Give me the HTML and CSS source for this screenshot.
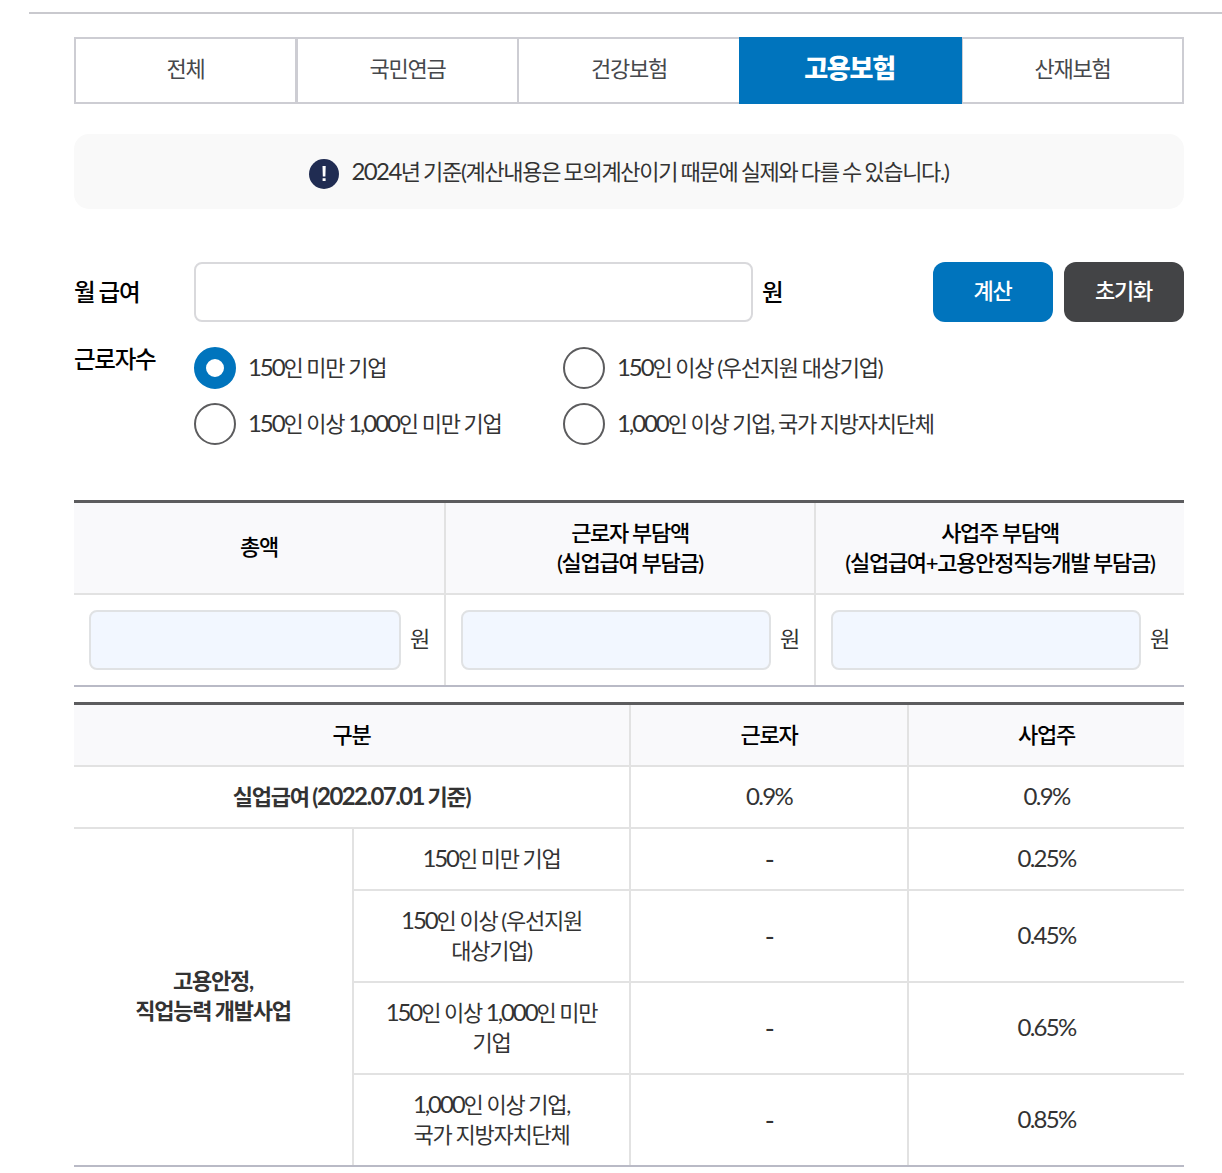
FILE: index.html
```html
<!DOCTYPE html>
<html lang="ko">
<head>
<meta charset="utf-8">
<title>고용보험 계산</title>
<link rel="stylesheet" href="styles.css">
</head>
<body>
<hr class="rule">
<main class="page">
<nav class="tabs"><a class="tab">전체</a><a class="tab">국민연금</a><a class="tab">건강보험</a><a class="tab active">고용보험</a><a class="tab">산재보험</a></nav>
<div class="notice"><svg class="mark" viewBox="0 0 30 30" width="30" height="30"><circle cx="15" cy="15" r="15" fill="#202c52"/><path d="M13.5 7h3.2l-.3 10.5h-2.6zM13.6 19.2h3v2.8h-3z" fill="#fff"/></svg><p><span class="n year">2024</span>년 기준(계산내용은 모의계산이기 때문에 실제와 다를 수 있습니다.)</p></div>
<form class="form">
<div class="salary"><label class="label">월 급여</label><input class="salary-input" type="text"><span class="won">원</span><button class="btn primary" type="button">계산</button><button class="btn dark" type="button">초기화</button></div>
<div class="workers"><span class="label">근로자수</span><div class="options">
<label class="option"><i class="radio checked"></i><span class="text"><span class="n">150</span>인 미만 기업</span></label>
<label class="option"><i class="radio"></i><span class="text"><span class="n">150</span>인 이상 (우선지원 대상기업)</span></label>
<label class="option"><i class="radio"></i><span class="text"><span class="n">150</span>인 이상 <span class="n">1,000</span>인 미만 기업</span></label>
<label class="option"><i class="radio"></i><span class="text"><span class="n">1,000</span>인 이상 기업, 국가 지방자치단체</span></label>
</div></div>
</form>
<table class="table result">
<colgroup><col class="r1"><col class="r2"><col class="r3"></colgroup>
<thead><tr><th class="total">총액</th><th>근로자 부담액<br>(실업급여 부담금)</th><th>사업주 부담액<br>(실업급여+고용안정직능개발 부담금)</th></tr></thead>
<tbody><tr><td><div class="amount"><input type="text"><span>원</span></div></td><td><div class="amount"><input type="text"><span>원</span></div></td><td><div class="amount"><input type="text"><span>원</span></div></td></tr></tbody>
</table>
<table class="table rates">
<colgroup><col class="c1"><col class="c2"><col class="c3"><col class="c4"></colgroup>
<thead><tr><th colspan="2">구분</th><th>근로자</th><th>사업주</th></tr></thead>
<tbody>
<tr class="single"><th colspan="2">실업급여 (<span class="n year">2022.07.01</span> 기준)</th><td><span class="n pct">0.9%</span></td><td><span class="n pct">0.9%</span></td></tr>
<tr class="single"><th rowspan="4" class="group">고용안정,<br>직업능력 개발사업</th><td><span class="n">150</span>인 미만 기업</td><td><span class="dash">-</span></td><td><span class="n pct">0.25%</span></td></tr>
<tr class="double"><td><span class="n">150</span>인 이상 (우선지원<br>대상기업)</td><td><span class="dash">-</span></td><td><span class="n pct">0.45%</span></td></tr>
<tr class="double"><td><span class="n">150</span>인 이상 <span class="n">1,000</span>인 미만<br>기업</td><td><span class="dash">-</span></td><td><span class="n pct">0.65%</span></td></tr>
<tr class="double last"><td><span class="n">1,000</span>인 이상 기업,<br>국가 지방자치단체</td><td><span class="dash">-</span></td><td><span class="n pct">0.85%</span></td></tr>
</tbody>
</table>
</main>
</body>
</html>
```
FILE: styles.css
```css
* { box-sizing: border-box; }
body { margin: 0; background: #fff; color: #333; font: 22px/30px Lato, "Noto Sans CJK KR", sans-serif; letter-spacing: -1.25px; word-spacing: -.5px; }
.n { font-size: 24px; line-height: 0; letter-spacing: -2.1px; }
.year { letter-spacing: -1.6px; }
.pct { letter-spacing: -1.7px; }
.dash { font-size: 27px; line-height: 0; vertical-align: -2px; }
.rule { margin: 12px 0 0 29px; border: 0; height: 2px; background: #c9c9ce; }
.page { width: 1110px; margin: 23px 0 0 74px; }
.tabs { display: grid; grid-template-columns: 224px 221px 220px 223px 222px; height: 67px; }
.tab { display: flex; align-items: center; justify-content: center; padding-bottom: 3px; border: 2px solid #cdcdd3; border-left-width: 0; color: #46484c; }
.tab:first-child { border-left-width: 2px; border-right-width: 3px; }
.tab:nth-child(3) { border-right-width: 0; }
.tab:last-child { border-left-width: 1px; }
.tab.active { border-color: #0074bd; background: #0074bd; color: #fff; font-size: 26px; font-weight: 900; padding-bottom: 6px; }
.notice { display: flex; align-items: center; justify-content: center; gap: 12px; height: 75px; margin-top: 30px; border-radius: 15px; background: #f9f9f9; }
.notice p { margin: 0; letter-spacing: -1.3px; word-spacing: -1px; }
.mark { margin-top: 4px; }
.form { margin: 53px 0 0; }
.salary { display: flex; align-items: center; }
.label { width: 120px; color: #000; font-size: 23.5px; font-weight: 500; }
.salary-input { width: 559px; height: 60px; border: 2px solid #d9d9dc; border-radius: 8px; }
.won { width: 180px; padding-left: 9px; font-size: 23.5px; font-weight: 500; color: #000; }
.btn { width: 120px; height: 60px; padding: 0 1px 2px 0; border: 0; border-radius: 12px; color: #fff; font: inherit; font-weight: 500; letter-spacing: inherit; }
.primary { background: #0074bd; }
.dark { margin-left: 11px; background: #434446; }
.workers { display: flex; margin-top: 25px; }
.workers .label { margin-top: -3px; }
.options { display: grid; grid-template-columns: 369px 1fr; row-gap: 14px; flex: 1; }
.option { display: flex; align-items: center; gap: 12px; }
.radio { width: 42px; height: 42px; border: 2px solid #5c5c5e; border-radius: 50%; }
.radio.checked { border: 12px solid #0074bd; }
.table { width: 1110px; border-collapse: separate; border-spacing: 0; table-layout: fixed; border-top: 3px solid #5c5c5e; border-bottom: 2px solid #b9bac6; }
.table th, .table td { padding: 0; border: 0 solid #e2e2e2; border-left-width: 2px; border-bottom-width: 2px; text-align: center; }
.table tr > :first-child { border-left-width: 0; }
.table thead th { background: #f9f9fb; color: #000; font-weight: 500; }
.result { margin-top: 55px; }
.result th { height: 92px; }
.result .total { padding-bottom: 3px; }
.result tbody td { height: 90px; padding: 0; border-bottom: 0; }
.r1 { width: 370px; } .r2 { width: 370px; } .r3 { width: 370px; }
.amount { display: flex; align-items: center; padding: 0 15px; }
.amount input { flex: 1; min-width: 0; height: 60px; border: 2px solid #e0e2e4; border-radius: 8px; background: #f2f7ff; margin-right: 9px; }
.amount span { padding-bottom: 3px; }
.rates { margin-top: 15px; }
.c1 { width: 278px; } .c2 { width: 277px; } .c3 { width: 278px; } .c4 { width: 277px; }
.rates thead th, .single td, .single th { height: 62px; }
.double td { height: 92px; }
.rates .double td:first-child { border-left-width: 2px; }
.rates .last td { height: 90px; border-bottom: 0; }
.rates .group { padding-bottom: 3px; border-bottom: 0; }
```
